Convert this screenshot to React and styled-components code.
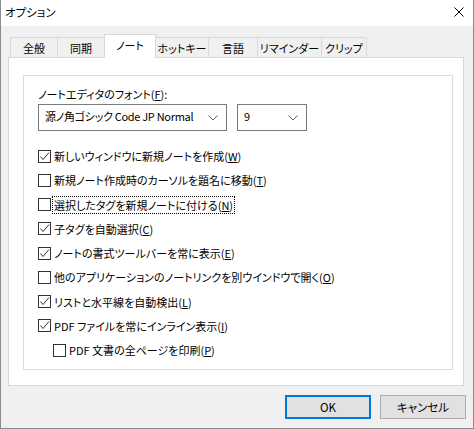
import React from "react";
import styled, { createGlobalStyle } from "styled-components";

const Global = createGlobalStyle`
  html, body { margin: 0; padding: 0; background: #fff; }
  body {
    font-family: "Noto Sans CJK JP", "Noto Sans", sans-serif;
    font-size: 11px;
    font-feature-settings: "palt";
    color: #000;
    white-space: nowrap;
  }
  * { box-sizing: border-box; }
`;

const Window = styled.div`
  width: 474px;
  height: 429px;
  border: 1px solid #8c8c8c;
  border-top: none;
  display: flex;
  flex-direction: column;
  background: #f0f0f0;
`;

const TitleBar = styled.div`
  height: 26px;
  background: #fff;
  display: flex;
  align-items: center;
  justify-content: space-between;
  padding: 0 9px 2px 4px;
  font-size: 11.5px;
  line-height: 16px;
`;

const Body = styled.div`
  flex: 1;
  display: flex;
  flex-direction: column;
`;

const TabStrip = styled.div`
  display: flex;
  align-items: flex-end;
  height: 31px;
  padding: 8px 0 0 9px;
`;

const Tab = styled.div`
  width: ${(p) => p.$w}px;
  height: ${(p) => (p.$active ? 24 : 20)}px;
  margin-left: ${(p) => (p.$first ? 0 : -1)}px;
  margin-bottom: ${(p) => (p.$active ? -1 : 0)}px;
  border: 1px solid #d9d9d9;
  border-bottom: none;
  background: ${(p) => (p.$active ? "#fff" : "#f0f0f0")};
  display: flex;
  align-items: center;
  justify-content: center;
  padding-bottom: ${(p) => (p.$active ? 3 : 0)}px;
  line-height: 16px;
  position: relative;
  z-index: ${(p) => (p.$active ? 1 : 0)};
`;

const Panel = styled.div`
  margin-left: 7px;
  width: 456px;
  height: 329px;
  border: 1px solid #d9d9d9;
  background: #fff;
  padding: 17px 0 0 14px;
`;

const Group = styled.div`
  width: 430px;
  height: 295px;
  border: 1px solid #dcdcdc;
  padding: 10px 0 0 14px;
  display: flex;
  flex-direction: column;
`;

const FieldLabel = styled.div`
  line-height: 16px;
`;

const SelectRow = styled.div`
  display: flex;
  gap: 10px;
  margin-top: 2px;
`;

const Select = styled.div`
  width: ${(p) => p.$w}px;
  height: 27px;
  border: 1px solid #7a7a7a;
  background: #fff;
  display: flex;
  align-items: center;
  justify-content: space-between;
  padding: 0 8px 3px 6px;
  letter-spacing: -0.3px;
  line-height: 16px;
`;

const Chevron = () => (
  <svg width="10" height="6" viewBox="0 0 10 6" style={{ marginTop: 4 }}>
    <polyline points="0.5,0.5 5,5 9.5,0.5" fill="none" stroke="#606060" strokeWidth="1" />
  </svg>
);

const CheckList = styled.div`
  margin-top: 13px;
  display: flex;
  flex-direction: column;
`;

const Row = styled.div`
  height: 24.25px;
  display: flex;
  align-items: center;
  gap: 3px;
  padding-left: ${(p) => (p.$indent ? 15 : 0)}px;
  line-height: 16px;
`;

const Box = styled.span`
  width: 13px;
  height: 13px;
  border: 1px solid #333;
  background: #fff;
  display: inline-flex;
  flex: none;
`;

const Label = styled.span`
  padding: 0 1px;
  margin-left: -1px;
  outline: ${(p) => (p.$focus ? "1px dotted #000" : "none")};
  outline-offset: 0;
`;

const Check = () => (
  <svg width="11" height="11" viewBox="0 0 11 11">
    <polyline points="1.5,5.5 4,8.5 10,1.5" fill="none" stroke="#333" strokeWidth="1" />
  </svg>
);

const Footer = styled.div`
  display: flex;
  justify-content: flex-end;
  gap: 9px;
  margin-top: 9px;
  padding-right: 7px;
`;

const Button = styled.div`
  width: 86px;
  height: 24px;
  background: #e1e1e1;
  border: ${(p) => (p.$default ? "2px solid #0078d7" : "1px solid #adadad")};
  display: flex;
  align-items: center;
  justify-content: center;
  font-size: 11.5px;
  line-height: 16px;
`;

const CloseIcon = () => (
  <svg width="10" height="10" viewBox="0 0 10 10">
    <path d="M0.5 0.5 L9.5 9.5 M9.5 0.5 L0.5 9.5" stroke="#000" strokeWidth="1" />
  </svg>
);

const tabs = [
  ["全般", 48],
  ["同期", 48],
  ["ノート", 52],
  ["ホットキー", 54],
  ["言語", 50],
  ["リマインダー", 65],
  ["クリップ", 46],
];

const items = [
  { text: "新しいウィンドウに新規ノートを作成", key: "W", checked: true },
  { text: "新規ノート作成時のカーソルを題名に移動", key: "T" },
  { text: "選択したタグを新規ノートに付ける", key: "N", focus: true },
  { text: "子タグを自動選択", key: "C", checked: true },
  { text: "ノートの書式ツールバーを常に表示", key: "E", checked: true },
  { text: "他のアプリケーションのノートリンクを別ウインドウで開く", key: "O" },
  { text: "リストと水平線を自動検出", key: "L", checked: true },
  { text: "PDF ファイルを常にインライン表示", key: "I", checked: true },
  { text: "PDF 文書の全ページを印刷", key: "P", indent: true },
];

export default function App() {
  return (
    <>
      <Global />
      <Window>
        <TitleBar>
          <span>オプション</span>
          <CloseIcon />
        </TitleBar>
        <Body>
          <TabStrip>
            {tabs.map(([t, w], i) => (
              <Tab key={t} $w={w} $first={i === 0} $active={i === 2}>
                {t}
              </Tab>
            ))}
          </TabStrip>
          <Panel>
            <Group>
              <FieldLabel>
                ノートエディタのフォント(<u>F</u>):
              </FieldLabel>
              <SelectRow>
                <Select $w={189}>
                  <span>源ノ角ゴシック Code JP Normal</span>
                  <Chevron />
                </Select>
                <Select $w={70}>
                  <span>9</span>
                  <Chevron />
                </Select>
              </SelectRow>
              <CheckList>
                {items.map((it) => (
                  <Row key={it.key} $indent={it.indent}>
                    <Box>{it.checked && <Check />}</Box>
                    <Label $focus={it.focus}>
                      {it.text}(<u>{it.key}</u>)
                    </Label>
                  </Row>
                ))}
              </CheckList>
            </Group>
          </Panel>
          <Footer>
            <Button $default>OK</Button>
            <Button>キャンセル</Button>
          </Footer>
        </Body>
      </Window>
    </>
  );
}
